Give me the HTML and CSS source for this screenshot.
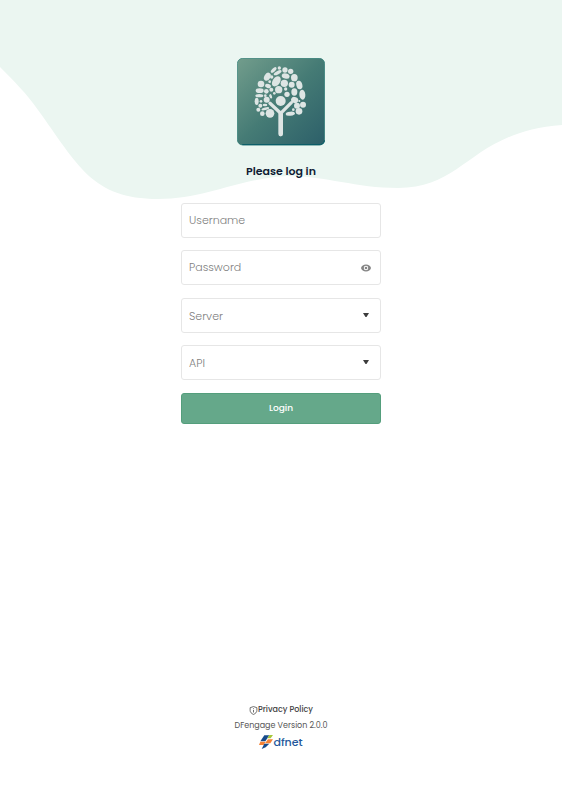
FILE: index.html
```html
<!doctype html>
<html lang="en">

<head>
	<meta charset="utf-8">
	<meta name="viewport" content="width=device-width, initial-scale=1">
	<title>DFengage - Log in</title>
	<link rel="stylesheet" href="styles.css">
</head>

<body>
	<svg class="wave" viewBox="0 0 562 200" preserveAspectRatio="none" aria-hidden="true">
		<path d="M0 0H562V125C470 132 466 188 398 188C356 188 326 176 288 176C240 178 206 199 158 199C92 199 78 165 38 110C26 93 14 81 0 67Z" />
	</svg>

	<main class="login">
		<svg class="logo" viewBox="18 17 264 264" role="img" aria-label="DFengage">
			<defs>
				<linearGradient id="logoFill" x1="0" y1="0" x2="1" y2="1">
					<stop offset="0" stop-color="#729d8c" />
					<stop offset="0.5" stop-color="#457b75" />
					<stop offset="1" stop-color="#2c5f69" />
				</linearGradient>
			</defs>
			<rect x="19" y="18" width="262" height="260" rx="16" fill="url(#logoFill)" stroke="#277a72" stroke-width="2" />
			<path d="M34 277H268Q280 276 281 264" fill="none" stroke="#075b68" stroke-width="3" />
			<g fill="#dde5e4">
				<!-- crown -->
				<ellipse cx="128" cy="53" rx="11" ry="5" transform="rotate(-45 128 53)" />
				<circle cx="145" cy="47" r="5" />
				<ellipse cx="140" cy="61" rx="13" ry="5" transform="rotate(-28 140 61)" />
				<circle cx="162" cy="53" r="8" />
				<circle cx="179" cy="57" r="8" />
				<ellipse cx="109" cy="73" rx="13" ry="9" transform="rotate(-60 109 73)" />
				<circle cx="122" cy="74" r="5" />
				<ellipse cx="164" cy="71" rx="12" ry="8" transform="rotate(15 164 71)" />
				<ellipse cx="190" cy="76" rx="10" ry="11" />
				<ellipse cx="136" cy="87" rx="17" ry="11" transform="rotate(-55 136 87)" />
				<circle cx="90" cy="95" r="10" />
				<circle cx="116" cy="88" r="4" />
				<ellipse cx="111" cy="101" rx="9" ry="6" transform="rotate(20 111 101)" />
				<circle cx="160" cy="93" r="11" />
				<circle cx="182" cy="97" r="9" />
				<ellipse cx="205" cy="98" rx="9" ry="13" transform="rotate(-15 205 98)" />
				<circle cx="143" cy="112" r="11" />
				<circle cx="121" cy="112" r="6" />
				<circle cx="164" cy="110" r="5" />
				<ellipse cx="86" cy="115" rx="12" ry="7" />
				<circle cx="106" cy="117" r="7" />
				<circle cx="130" cy="123" r="4" />
				<circle cx="168" cy="126" r="8" />
				<ellipse cx="190" cy="119" rx="9" ry="11" />
				<ellipse cx="214" cy="127" rx="9" ry="15" transform="rotate(-5 214 127)" />
				<ellipse cx="85" cy="130" rx="12" ry="5" />
				<circle cx="103" cy="130" r="4" />
				<ellipse cx="119" cy="132" rx="4" ry="7" transform="rotate(-20 119 132)" />
				<circle cx="107" cy="142" r="9" />
				<ellipse cx="191" cy="143" rx="11" ry="9" transform="rotate(25 191 143)" />
				<ellipse cx="77" cy="147" rx="6" ry="11" />
				<circle cx="90" cy="147" r="4" />
				<circle cx="205" cy="146" r="3" />
				<circle cx="88" cy="160" r="6" />
				<ellipse cx="102" cy="158" rx="7" ry="4" />
				<circle cx="198" cy="160" r="9" />
				<circle cx="216" cy="157" r="9" />
				<circle cx="82" cy="172" r="6" />
				<ellipse cx="103" cy="169" rx="12" ry="4" transform="rotate(-15 103 169)" />
				<circle cx="187" cy="172" r="4" />
				<circle cx="94" cy="184" r="7" />
				<circle cx="117" cy="183" r="13" />
				<ellipse cx="178" cy="184" rx="14" ry="6" transform="rotate(-6 178 184)" />
				<circle cx="204" cy="177" r="10" />
				<!-- figure -->
				<circle cx="149" cy="146" r="15" />
			</g>
			<path d="M117 153L149 183V247M181 151L149 183" fill="none" stroke="#dde5e4" stroke-width="10" stroke-linecap="round" stroke-linejoin="round" />
			<path d="M149 184V245" stroke="#dde5e4" stroke-width="14" stroke-linecap="round" />
		</svg>

		<h1 class="title">Please log in</h1>

		<form class="form" action="#">
			<div class="group">
				<div class="field">
					<input class="control" type="text" id="username" placeholder="Username" aria-label="Username" autocomplete="username">
				</div>
				<div class="field">
					<input class="control" type="password" id="password" placeholder="Password" aria-label="Password" autocomplete="current-password">
					<button class="reveal" type="button" aria-label="Show password">
						<svg class="eye" viewBox="0 0 22 16" aria-hidden="true">
							<path fill-rule="evenodd" d="M11 1C6 1 2 4 1 8C2 12 6 15 11 15S20 12 21 8C20 4 16 1 11 1ZM11 3.5A4.5 4.5 0 1 1 11 12.5A4.5 4.5 0 0 1 11 3.5Z" />
							<circle cx="11" cy="8" r="2.6" />
						</svg>
					</button>
				</div>
			</div>
			<div class="group">
				<div class="field">
					<select class="control" id="server" aria-label="Server">
						<option>Server</option>
					</select>
					<svg class="arrow" viewBox="0 0 6 4" aria-hidden="true"><path d="M0 0H6L3.5 4H2.5Z" /></svg>
				</div>
				<div class="field">
					<select class="control" id="api" aria-label="API">
						<option>API</option>
					</select>
					<svg class="arrow" viewBox="0 0 6 4" aria-hidden="true"><path d="M0 0H6L3.5 4H2.5Z" /></svg>
				</div>
			</div>
			<button class="submit" type="submit">Login</button>
		</form>
	</main>

	<footer class="footer">
		<a class="policy" href="#">
			<svg class="shield" viewBox="0 0 16 16" aria-hidden="true">
				<path d="M8 1L14 3V8C14 11 11.500 13.500 8 15C4.500 13.500 2 11 2 8V3ZM8 4V5.500M8 7V11.500" />
			</svg>Privacy Policy</a>
		<span class="version">DFengage Version 2.0.0</span>
		<span class="brand">
			<svg class="mark" viewBox="0 0 42 42" aria-hidden="true">
				<path d="M16 1H31L19 19H4Z" fill="#164a8b" />
				<path d="M31 0H42L35 10H25Z" fill="#a6c73a" />
				<path d="M27 13H42L34 25H18Z" fill="#f58235" />
				<path d="M4 20H20L14 30H0Z" fill="#f58235" />
				<path d="M16 26H31L20 37L8 42Z" fill="#164a8b" />
			</svg>dfnet</span>
	</footer>
</body>

</html>
```
FILE: styles.css
```css
* {
	box-sizing: border-box;
}

body {
	display: flex;
	flex-direction: column;
	align-items: center;
	min-height: 100vh;
	margin: 0;
	padding: 58px 16px 50px;
	background: #fff;
	font-family: Poppins, Inter, "Liberation Sans", sans-serif;
}

.wave {
	position: absolute;
	top: 0;
	left: 0;
	z-index: -1;
	width: 100%;
	height: 200px;
	fill: #ebf6f1;
}

.login {
	display: flex;
	flex-direction: column;
	align-items: center;
	width: 100%;
	max-width: 200px;
}

.logo {
	width: 88px;
	height: 88px;
}

.title {
	margin: 15px 0 22px;
	color: #101c34;
	font-size: 11px;
	font-weight: 600;
	line-height: 20px;
}

.form {
	display: grid;
	gap: 13px;
	width: 100%;
}

.group {
	display: grid;
	gap: 12px;
}

.field {
	position: relative;
}

.control {
	display: block;
	width: 100%;
	height: 35px;
	padding: 0 28px 0 7px;
	border: 1px solid #e6e6e6;
	border-radius: 3px;
	appearance: none;
	background: #fff;
	color: #808080;
	font-family: inherit;
	font-size: 11px;
	font-weight: 300;
}

.control::placeholder {
	color: #808080;
	opacity: 1;
}

.reveal {
	position: absolute;
	top: 8px;
	right: 5px;
	display: flex;
	align-items: center;
	justify-content: center;
	width: 20px;
	height: 20px;
	padding: 0;
	border: 0;
	background: none;
	cursor: pointer;
}

.eye {
	width: 12px;
	height: 8px;
	fill: #858585;
}

.arrow {
	position: absolute;
	top: 15px;
	right: 12px;
	width: 6px;
	height: 4px;
	fill: #3c3c3c;
	pointer-events: none;
}

.submit {
	height: 31px;
	padding: 0;
	border: 1px solid #549e7c;
	border-radius: 3px;
	background: #65a88a;
	color: #fff;
	font-family: inherit;
	font-size: 9px;
	font-weight: 500;
	cursor: pointer;
}

.footer {
	display: flex;
	flex-direction: column;
	align-items: center;
	margin-top: auto;
	color: #555;
	font-size: 8px;
	line-height: 16px;
}

.policy {
	display: flex;
	align-items: center;
	color: #444;
	font-weight: 500;
	text-decoration: none;
}

.shield {
	width: 9px;
	height: 9px;
	fill: none;
	stroke: #555;
	stroke-width: 1.5;
}

.brand {
	display: flex;
	align-items: center;
	color: #24589c;
	font-size: 11px;
	font-weight: 500;
}

.mark {
	width: 14px;
	height: 14px;
}
```
